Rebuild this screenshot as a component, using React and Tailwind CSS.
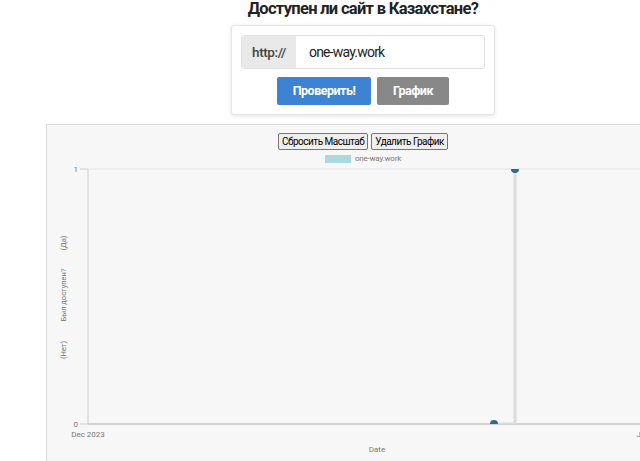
import React from "react";

const font = { fontFamily: "Roboto, 'Noto Sans', sans-serif" };

function ChartPlot() {
  const axisX = 41;
  const topY = 5;
  const zeroY = 260;
  return (
    <svg width="632" height="300" className="block" style={font}>
      <defs>
        <clipPath id="plot">
          <rect x={axisX} y={topY} width="600" height={zeroY - topY} />
        </clipPath>
      </defs>
      <line x1={axisX} y1={topY} x2="632" y2={topY} stroke="#e4e4e4" strokeWidth="1" />
      <line x1={axisX - 8} y1={topY} x2={axisX} y2={topY} stroke="#cfcfcf" strokeWidth="1" />
      <line x1={axisX - 8} y1={zeroY} x2={axisX} y2={zeroY} stroke="#cfcfcf" strokeWidth="1" />
      <line x1={axisX} y1={topY} x2={axisX} y2={zeroY} stroke="#cccccc" strokeWidth="1" />
      <line x1={axisX} y1={zeroY} x2="632" y2={zeroY} stroke="#c4c4c4" strokeWidth="1.5" />

      <text x="31" y={topY + 3} fontSize="8" fill="#777" textAnchor="end">1</text>
      <text x="31" y={zeroY + 3} fontSize="8" fill="#777" textAnchor="end">0</text>

      <g fontSize="7.5" fill="#777" textAnchor="middle">
        <text transform="translate(19 79) rotate(-90)">(Да)</text>
        <text transform="translate(19 131) rotate(-90)">Был доступен?</text>
        <text transform="translate(19 186) rotate(-90)">(Нет)</text>
      </g>

      <g clipPath="url(#plot)">
        <polyline points={`447,${zeroY} 468,${zeroY} 468,${topY}`} fill="none" stroke="#dcdcdc" strokeWidth="3" />
        <circle cx="447" cy={zeroY} r="4" fill="#2c6b8c" />
        <circle cx="468" cy={topY} r="4" fill="#2c6b8c" />
      </g>

      <text x={axisX} y="273" fontSize="8" fill="#777" textAnchor="middle">Dec 2023</text>
      <text x="606" y="273" fontSize="8" fill="#777" textAnchor="middle">Jan 2024</text>
      <text x="330" y="288" fontSize="8" fill="#777" textAnchor="middle">Date</text>
    </svg>
  );
}

export default function App() {
  return (
    <div className="w-[640px] h-[461px] overflow-hidden bg-white">
      <div className="w-[726px] flex flex-col items-center" style={font}>
        <h1 className="text-[16.5px] leading-[20px] font-bold text-[#222] tracking-[-0.7px] -mt-[1px]">
          Доступен ли сайт в Казахстане?
        </h1>

        <div className="mt-[6px] w-[264px] h-[90px] bg-white border border-[#e6e6e6] rounded-[3px] shadow-[0_1px_4px_rgba(0,0,0,0.12)] px-[9px] pt-[9px]">
          <div className="flex h-[34px] border border-[#e2e2e2] rounded-[3px] overflow-hidden">
            <div className="w-[54px] bg-[#e9e9e9] flex items-center justify-center text-[13.5px] font-medium text-[#444] tracking-[-0.4px]">
              http://
            </div>
            <div className="flex-1 flex items-center pl-[13px] text-[14px] text-[#222] tracking-[-0.8px]">
              one-way.work
            </div>
          </div>
          <div className="flex justify-center gap-[6px] mt-[8px]">
            <button className="w-[94px] h-[28px] bg-[#3d83d3] text-white text-[12.5px] font-bold rounded-[2px] tracking-[-0.5px]">
              Проверить!
            </button>
            <button className="w-[72px] h-[28px] bg-[#888888] text-white text-[12.5px] font-bold rounded-[2px] tracking-[-0.5px]">
              График
            </button>
          </div>
        </div>

        <div className="mt-[9px] w-[634px] h-[360px] bg-[#f7f7f7] border border-[#dddddd] flex flex-col items-center">
          <div className="flex gap-[3px] mt-[8px]">
            <button className="h-[17px] px-[3px] text-[10px] leading-none text-black bg-[#efefef] border border-[#767676] rounded-[2px] tracking-[-0.5px]">
              Сбросить Масштаб
            </button>
            <button className="h-[17px] px-[3px] text-[10px] leading-none text-black bg-[#efefef] border border-[#767676] rounded-[2px] tracking-[-0.5px]">
              Удалить График
            </button>
          </div>
          <div className="flex items-center gap-[4px] mt-[4px] h-[10px]">
            <div className="w-[26px] h-[8px] bg-[#acd9e0]" />
            <span className="text-[8px] leading-none text-[#777] tracking-[-0.2px]">one-way.work</span>
          </div>
          <div className="self-start">
            <ChartPlot />
          </div>
        </div>
      </div>
    </div>
  );
}
